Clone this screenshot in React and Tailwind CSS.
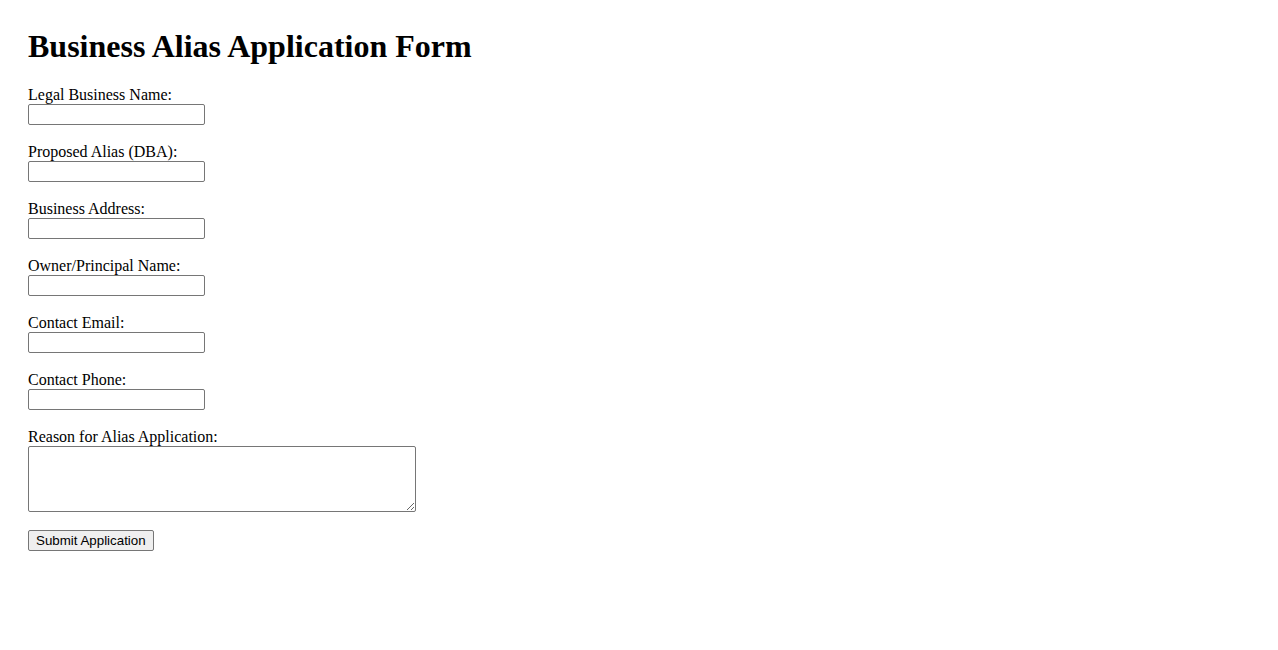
import React from 'react';

const fields = [
  'Legal Business Name:',
  'Proposed Alias (DBA):',
  'Business Address:',
  'Owner/Principal Name:',
  'Contact Email:',
  'Contact Phone:',
];

const App = () => {
  return (
    <div className="min-h-[650px] bg-white px-[28px] pt-[28px] text-black font-['Liberation_Serif',serif]">
      <h1 className="m-0 mb-[20px] text-[32px] leading-[37px] font-bold">Business Alias Application Form</h1>
      <form onSubmit={(e) => e.preventDefault()}>
        {fields.map((label) => (
          <div key={label} className="mb-[17px]">
            <label className="block pt-[1px] text-[16px] leading-[18px]">{label}</label>
            <input
              type="text"
              className="block h-[21px] w-[177px] rounded-[2px] border border-[#767676] bg-white px-[2px] text-[13px]"
            />
          </div>
        ))}
        <div className="mb-[16px]">
          <label className="block pt-[1px] text-[16px] leading-[18px]">Reason for Alias Application:</label>
          <textarea className="block h-[66px] w-[388px] resize rounded-[2px] border border-[#767676] bg-white p-[2px] text-[13px]" />
        </div>
        <button
          type="submit"
          className="h-[21px] rounded-[2px] border border-[#767676] bg-[#efefef] px-[7px] text-[13.33px] leading-[15px] text-black font-['Liberation_Sans',Arial,sans-serif]"
        >
          Submit Application
        </button>
      </form>
    </div>
  );
};

export default App;
